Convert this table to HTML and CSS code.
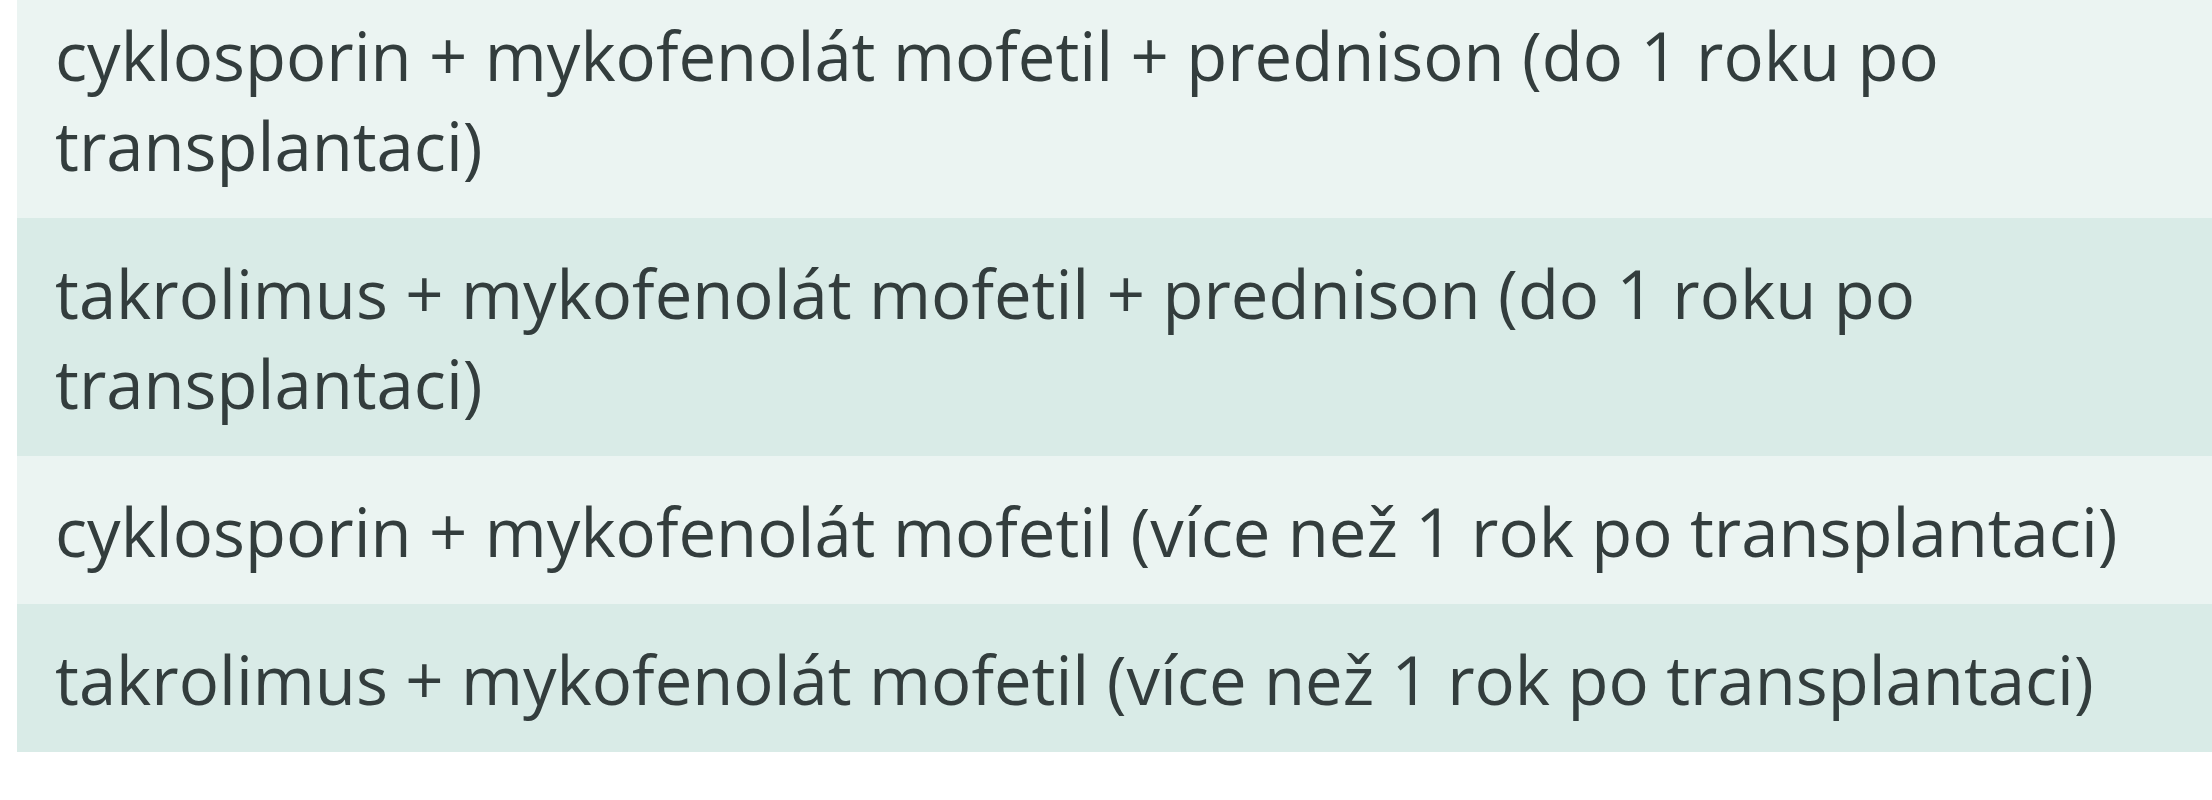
FILE: index.html
```html
<!DOCTYPE html>
<html lang="cs">

<head>
    <meta charset="UTF-8">
    <meta name="viewport" content="width=device-width, initial-scale=1.0">
    <title>Imunosupresivní režimy</title>
    <link rel="stylesheet" href="styles.css">
</head>

<body>
    <table class="regimens">
        <tbody>
            <tr class="row-light">
                <td>cyklosporin + mykofenolát mofetil + prednison (do 1 roku po transplantaci)</td>
            </tr>
            <tr class="row-dark">
                <td>takrolimus + mykofenolát mofetil + prednison (do 1 roku po transplantaci)</td>
            </tr>
            <tr class="row-light">
                <td>cyklosporin + mykofenolát mofetil (více než 1 rok po transplantaci)</td>
            </tr>
            <tr class="row-dark">
                <td>takrolimus + mykofenolát mofetil (více než 1 rok po transplantaci)</td>
            </tr>
        </tbody>
    </table>
</body>

</html>
```

FILE: styles.css
```css
body {
    font-family: "Open Sans", "Noto Sans", sans-serif;
    background-color: #ffffff;
    margin: 0;
    overflow: hidden;
}

.regimens {
    width: calc(100% - 17px);
    margin-top: -20px;
    margin-left: 17px;
    border-collapse: collapse;
}

.regimens td {
    padding: 30px 30px 28px 38px;
    font-size: 67px;
    line-height: 90px;
    color: #333d3d;
    text-align: left;
}

.row-light {
    background-color: #ebf4f2;
}

.row-dark {
    background-color: #d9ebe7;
}
```
